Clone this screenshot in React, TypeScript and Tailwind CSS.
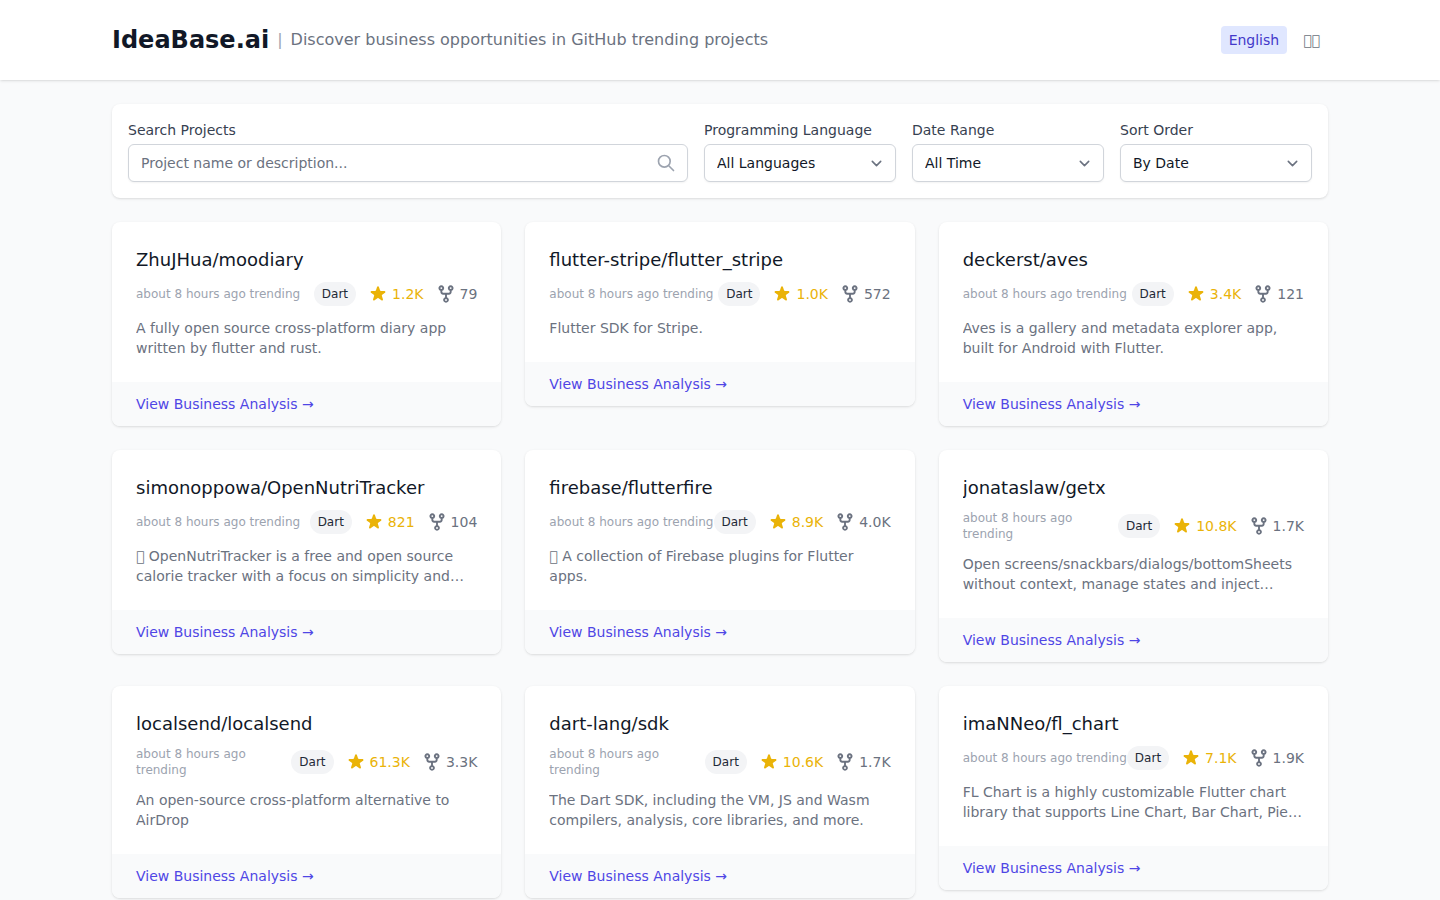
import { useMemo, useState } from "react";
import clsx from "clsx";

type Project = {
  name: string;
  language: string;
  stars: number;
  forks: number;
  description: string;
};

const PROJECTS: Project[] = [
  {
    name: "ZhuJHua/moodiary",
    language: "Dart",
    stars: 1200,
    forks: 79,
    description: "A fully open source cross-platform diary app written by flutter and rust.",
  },
  {
    name: "flutter-stripe/flutter_stripe",
    language: "Dart",
    stars: 1000,
    forks: 572,
    description: "Flutter SDK for Stripe.",
  },
  {
    name: "deckerst/aves",
    language: "Dart",
    stars: 3400,
    forks: 121,
    description: "Aves is a gallery and metadata explorer app, built for Android with Flutter.",
  },
  {
    name: "simonoppowa/OpenNutriTracker",
    language: "Dart",
    stars: 821,
    forks: 104,
    description:
      "\u{F0000} OpenNutriTracker is a free and open source calorie tracker with a focus on simplicity and privacy",
  },
  {
    name: "firebase/flutterfire",
    language: "Dart",
    stars: 8900,
    forks: 4000,
    description: "\u{F0000} A collection of Firebase plugins for Flutter apps.",
  },
  {
    name: "jonataslaw/getx",
    language: "Dart",
    stars: 10800,
    forks: 1700,
    description:
      "Open screens/snackbars/dialogs/bottomSheets without context, manage states and inject dependencies easily with Get.",
  },
  {
    name: "localsend/localsend",
    language: "Dart",
    stars: 61300,
    forks: 3300,
    description: "An open-source cross-platform alternative to AirDrop",
  },
  {
    name: "dart-lang/sdk",
    language: "Dart",
    stars: 10600,
    forks: 1700,
    description: "The Dart SDK, including the VM, JS and Wasm compilers, analysis, core libraries, and more.",
  },
  {
    name: "imaNNeo/fl_chart",
    language: "Dart",
    stars: 7100,
    forks: 1900,
    description:
      "FL Chart is a highly customizable Flutter chart library that supports Line Chart, Bar Chart, Pie Chart, Scatter Chart, and Radar Chart.",
  },
];

const LOCALES = [
  { id: "en", label: "English" },
  { id: "zh", label: "\u{F0000}\u{F0000}" },
];

function formatCount(value: number) {
  return value >= 1000 ? `${(value / 1000).toFixed(1)}K` : String(value);
}

function Header() {
  const [locale, setLocale] = useState("en");

  return (
    <header className="bg-white shadow-sm">
      <div className="mx-auto flex max-w-7xl items-center justify-between px-8 py-6">
        <div className="flex items-center">
          <h1 className="text-2xl font-bold text-[#111827]">IdeaBase.ai</h1>
          <span className="mx-2 text-[#9ca3af]">|</span>
          <p className="text-[#6b7280]">Discover business opportunities in GitHub trending projects</p>
        </div>

        <div className="flex items-center gap-2">
          {LOCALES.map(({ id, label }) => (
            <button
              key={id}
              type="button"
              onClick={() => setLocale(id)}
              className={clsx(
                "cursor-pointer rounded px-2 py-1 text-sm",
                locale === id ? "bg-[#e0e7ff] text-[#4338ca]" : "text-[#6b7280] hover:text-[#374151]"
              )}
            >
              {label}
            </button>
          ))}
        </div>
      </div>
    </header>
  );
}

type SelectFieldProps = {
  id: string;
  label: string;
  options: string[];
};

function SelectField({ id, label, options }: SelectFieldProps) {
  return (
    <div className="w-full md:w-48">
      <label htmlFor={id} className="mb-1 block text-sm text-[#374151]">
        {label}
      </label>
      <div className="relative">
        <select
          id={id}
          className="block w-full appearance-none rounded-md border border-[#d1d5db] bg-white py-2 pr-10 pl-3 text-sm text-[#111827] shadow-xs"
        >
          {options.map((option) => (
            <option key={option}>{option}</option>
          ))}
        </select>
        <svg
          className="pointer-events-none absolute inset-y-0 right-[9px] my-auto size-[21px] text-[#6b7280]"
          viewBox="0 0 20 20"
          fill="none"
          stroke="currentColor"
          strokeWidth={1.5}
          strokeLinecap="round"
          strokeLinejoin="round"
        >
          <path d="M6 8l4 4 4-4" />
        </svg>
      </div>
    </div>
  );
}

function StarIcon() {
  return (
    <svg className="size-5" viewBox="0 0 20 20" fill="currentColor">
      <path d="M9.049 2.927c.3-.921 1.603-.921 1.902 0l1.07 3.292a1 1 0 00.95.69h3.462c.969 0 1.371 1.24.588 1.81l-2.8 2.034a1 1 0 00-.364 1.118l1.07 3.292c.3.921-.755 1.688-1.54 1.118l-2.8-2.034a1 1 0 00-1.175 0l-2.8 2.034c-.784.57-1.838-.197-1.539-1.118l1.07-3.292a1 1 0 00-.364-1.118L2.98 8.72c-.783-.57-.38-1.81.588-1.81h3.461a1 1 0 00.951-.69l1.07-3.292z" />
    </svg>
  );
}

function ForkIcon() {
  return (
    <svg className="size-5" viewBox="0 0 16 16" fill="currentColor">
      <path d="M5 5.372v.878c0 .414.336.75.75.75h4.5a.75.75 0 0 0 .75-.75v-.878a2.25 2.25 0 1 1 1.5 0v.878a2.25 2.25 0 0 1-2.25 2.25h-1.5v2.128a2.251 2.251 0 1 1-1.5 0V8.5h-1.5A2.25 2.25 0 0 1 3.5 6.25v-.878a2.25 2.25 0 1 1 1.5 0ZM5 3.25a.75.75 0 1 0-1.5 0 .75.75 0 0 0 1.5 0Zm6.75.75a.75.75 0 1 0 0-1.5.75.75 0 0 0 0 1.5Zm-3 8.75a.75.75 0 1 0-1.5 0 .75.75 0 0 0 1.5 0Z" />
    </svg>
  );
}

function ProjectCard({ project }: { project: Project }) {
  return (
    <article className="overflow-hidden rounded-lg bg-white shadow-sm">
      <div className="p-6">
        <h2 className="truncate text-lg text-[#111827]">{project.name}</h2>
        <div className="mt-2 flex items-center justify-between">
          <span className="text-xs text-[#9ca3af]">about 8 hours ago trending</span>
          <div className="flex shrink-0 items-center gap-3">
            <span className="rounded-full bg-[#f3f4f6] px-2 py-1 text-xs text-[#1f2937]">{project.language}</span>
            <span className="flex items-center gap-1 text-sm text-[#eab308]">
              <StarIcon />
              {formatCount(project.stars)}
            </span>
            <span className="flex items-center gap-1 text-sm text-[#6b7280]">
              <ForkIcon />
              {formatCount(project.forks)}
            </span>
          </div>
        </div>
        <p className="mt-3 line-clamp-2 text-sm text-[#6b7280]">{project.description}</p>
      </div>
      <div className="bg-[#f9fafb] px-6 py-3 text-sm">
        <a href={`#${project.name}`} className="text-[#4f46e5] hover:text-[#6366f1]">
          View Business Analysis →
        </a>
      </div>
    </article>
  );
}

export default function App() {
  const [query, setQuery] = useState("");

  const projects = useMemo(() => {
    const term = query.trim().toLowerCase();
    return PROJECTS.filter((p) => `${p.name} ${p.description}`.toLowerCase().includes(term));
  }, [query]);

  return (
    <div className="min-h-screen bg-[#f9fafb] font-['DejaVu_Sans',sans-serif]">
      <Header />

      <main className="mx-auto max-w-7xl px-8 py-6">
        {/* Filters */}
        <div className="mb-6 flex flex-col gap-4 rounded-lg bg-white p-4 shadow-sm md:flex-row">
          <div className="flex-1">
            <label htmlFor="search" className="mb-1 block text-sm text-[#374151]">
              Search Projects
            </label>
            <div className="relative">
              <input
                id="search"
                type="text"
                value={query}
                onChange={(e) => setQuery(e.target.value)}
                placeholder="Project name or description..."
                className="block w-full rounded-md border border-[#d1d5db] bg-white py-2 pr-10 pl-3 text-sm text-[#111827] shadow-xs placeholder:text-[#6b7280]"
              />
              <svg
                className="pointer-events-none absolute inset-y-0 right-3 my-auto size-5 text-[#9ca3af]"
                viewBox="0 0 24 24"
                fill="none"
                stroke="currentColor"
                strokeWidth={2}
                strokeLinecap="round"
                strokeLinejoin="round"
              >
                <path d="M21 21l-6-6m2-5a7 7 0 11-14 0 7 7 0 0114 0z" />
              </svg>
            </div>
          </div>
          <SelectField id="language" label="Programming Language" options={["All Languages", "Dart"]} />
          <SelectField id="range" label="Date Range" options={["All Time", "Today", "This Week", "This Month"]} />
          <SelectField id="sort" label="Sort Order" options={["By Date", "By Stars"]} />
        </div>

        {/* Project grid */}
        <div className="grid grid-cols-1 items-start gap-6 md:grid-cols-2 lg:grid-cols-3">
          {projects.map((project) => (
            <ProjectCard key={project.name} project={project} />
          ))}
        </div>
      </main>
    </div>
  );
}
